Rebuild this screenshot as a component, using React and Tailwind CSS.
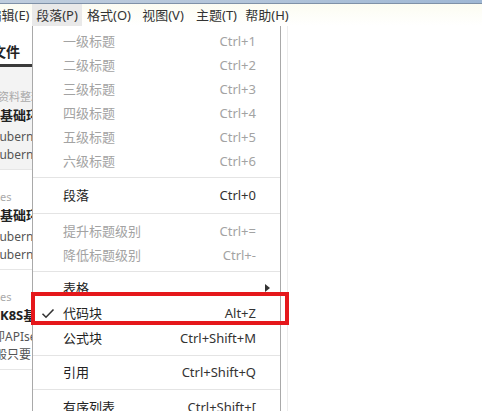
import React from 'react';

const menus = [
  { label: '编辑(E)', w: 'w-[46px] -ml-[14px]' },
  { label: '段落(P)', w: 'w-[50px]', active: true },
  { label: '格式(O)', w: 'w-[54px]' },
  { label: '视图(V)', w: 'w-[54px]' },
  { label: '主题(T)', w: 'w-[53px]' },
  { label: '帮助(H)', w: 'w-[48px]' },
];

const notes = [
  { meta: '资料整理', metaMl: '-ml-[2px]', title: '基础环境', lines: [['Kubernetes', '-ml-[8px]'], ['Kubernetes', '-ml-[8px]']], top: 'pt-[22px]', bg: 'bg-[#f3f3f3]', h: 'h-[103px]' },
  { meta: 'Notes', metaMl: '-ml-[19px]', title: '基础环境', lines: [['Kubernetes', '-ml-[8px]'], ['Kubernetes', '-ml-[8px]']], top: 'pt-[19px]', bg: 'bg-white', h: 'h-[100px]' },
  { meta: 'Notes', metaMl: '-ml-[19px]', title: 'K8S基础', lines: [['即APIserver', '-ml-[7px]'], ['一般只要', '-ml-[17px]']], top: 'pt-[19px]', bg: 'bg-white', h: 'h-[100px]' },
];

const Check = () => (
  <svg width="14" height="11" viewBox="0 0 14 11" className="text-[#333]">
    <path d="M1.5 5.8 L5 9.2 L12.5 1.5" fill="none" stroke="currentColor" strokeWidth="1.6" />
  </svg>
);

const Row = ({ label, keys, disabled, checked, sub, h = 'h-6' }) => (
  <div className={`${h} flex items-center pr-[24px] leading-[18px]`}>
    <div className="w-[30px] flex justify-center">{checked && <Check />}</div>
    <span className={`flex-1 ${disabled ? 'text-[#a3a3a3]' : 'text-[#222]'}`}>{label}</span>
    {keys && <span className={disabled ? 'text-[#a3a3a3]' : 'text-[#333]'}>{keys}</span>}
    {sub && (
      <svg width="5" height="8" viewBox="0 0 5 8" className="-mr-[14px]">
        <polygon points="0,0 5,4 0,8" fill="#333" />
      </svg>
    )}
  </div>
);

const Sep = ({ mt, mb }) => (
  <div className={`${mt} ${mb} h-px bg-[#e4e4e4]`} />
);

export default function App() {
  return (
    <div className="relative w-[482px] h-[411px] overflow-hidden bg-white font-['Noto_Sans','Noto_Sans_CJK_SC',sans-serif] text-[13px]">
      {/* window title strip */}
      <div className="h-[4px] bg-gradient-to-r from-[#bfcddd] via-[#b3c5da] to-[#9fb7d4] border-b border-[#7f91a7]" />

      {/* menu bar */}
      <div className="h-[22px] flex bg-gradient-to-b from-[#fcfcf2] to-white text-[#333] overflow-hidden">
        {menus.map((m) => (
          <div
            key={m.label}
            className={`${m.w} shrink-0 flex items-center justify-center leading-[18px] ${m.active ? 'bg-[#e9e9e9]' : ''}`}
          >
            {m.label}
          </div>
        ))}
      </div>

      <div className="flex h-[385px]">
        {/* file sidebar, clipped by the open menu */}
        <div className="w-[32px] shrink-0 overflow-hidden whitespace-nowrap">
          <div className="h-[38px] pt-[16px] leading-[20px] text-[14px] font-bold text-[#222] -ml-[8px]">文件</div>
          <div className="h-[3px] bg-[#3a3a3a]" />
          {notes.map((n, i) => (
            <div key={i} className={`${n.h} ${n.top} ${n.bg} border-b border-[#e6e6e6]`}>
              <div className={`${n.metaMl} text-[11px] leading-[16px] text-[#aaa]`}>{n.meta}</div>
              <div className="text-[13px] leading-[20px] font-bold text-[#222]">{n.title}</div>
              <div className="mt-[3px] text-[12px] leading-[18px] text-[#555]">
                {n.lines.map(([l, ml], j) => (
                  <div key={j} className={ml}>{l}</div>
                ))}
              </div>
            </div>
          ))}
        </div>

        {/* paragraph dropdown */}
        <div className="w-[249px] shrink-0 bg-white border-x border-[#a9a9a9] pt-[3px] whitespace-nowrap">
          <Row label="一级标题" keys="Ctrl+1" disabled />
          <Row label="二级标题" keys="Ctrl+2" disabled />
          <Row label="三级标题" keys="Ctrl+3" disabled />
          <Row label="四级标题" keys="Ctrl+4" disabled />
          <Row label="五级标题" keys="Ctrl+5" disabled />
          <Row label="六级标题" keys="Ctrl+6" disabled />
          <Sep mt="mt-[4px]" mb="mb-[5px]" />
          <Row label="段落" keys="Ctrl+0" />
          <Sep mt="mt-[6px]" mb="mb-[5px]" />
          <Row label="提升标题级别" keys="Ctrl+=" disabled />
          <Row label="降低标题级别" keys="Ctrl+-" disabled />
          <Sep mt="mt-[4px]" mb="mb-[4px]" />
          <Row label="表格" sub />
          <Row label="代码块" keys="Alt+Z" checked h="h-[26px]" />
          <Row label="公式块" keys="Ctrl+Shift+M" />
          <Sep mt="mt-[5px]" mb="mb-[4px]" />
          <Row label="引用" keys="Ctrl+Shift+Q" />
          <Sep mt="mt-[5px]" mb="mb-[5px]" />
          <Row label="有序列表" keys="Ctrl+Shift+[" />
        </div>

        <div className="flex-1 ml-[6px] border-l border-[#ededed]" />
      </div>

      {/* annotation box */}
      <div className="absolute left-[31px] top-[292px] w-[258px] h-[33px] border-[4px] border-[#e5171b]" />
    </div>
  );
}
